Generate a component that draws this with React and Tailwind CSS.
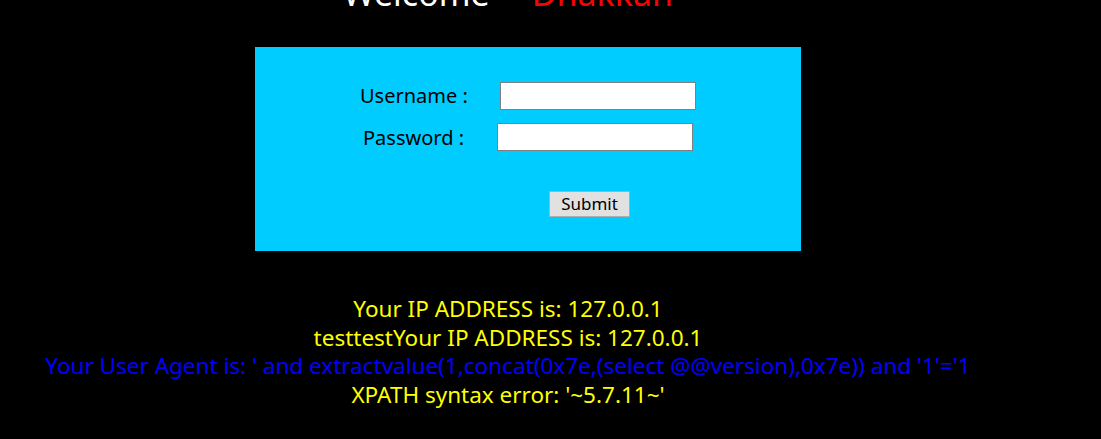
export default function App() {
  const font = { fontFamily: '"Noto Sans", "Open Sans", sans-serif' };
  return (
    <div className="w-[1101px] h-[439px] bg-black overflow-hidden flex flex-col" style={font}>
      <div className="h-[47px] flex flex-col">
        <div className="flex w-[1016px] justify-center mt-[-27px] text-[34px] leading-[40px]">
          <span className="text-white">Welcome</span>
          <span className="w-[42px]"></span>
          <span className="text-[#ff0000]">Dhakkan</span>
        </div>
      </div>
      <div className="ml-[255px] w-[546px] h-[204px] bg-[#00ccff] flex flex-col shrink-0">
        <div className="flex items-center mt-[35px] h-[27px]">
          <span className="ml-[105px] w-[140px] text-[20px] leading-[27px] text-black">Username :</span>
          <input className="w-[196px] h-[28px] bg-white border border-[#808080]" />
        </div>
        <div className="flex items-center mt-[14px] h-[28px]">
          <span className="ml-[108px] w-[134px] text-[20px] leading-[27px] text-black">Password :</span>
          <input className="w-[196px] h-[28px] bg-white border border-[#808080]" />
        </div>
        <div className="flex mt-[40px]">
          <button className="ml-[294px] w-[81px] h-[26px] bg-[#e1e1e1] border border-[#adadad] text-[17px] leading-[22px] text-black">Submit</button>
        </div>
      </div>
      <div className="w-[1016px] mt-[44px] text-center text-[22.5px] leading-[28.7px]">
        <div className="text-[#ffff00]">Your IP ADDRESS is: 127.0.0.1</div>
        <div className="text-[#ffff00]">testtestYour IP ADDRESS is: 127.0.0.1</div>
        <div className="text-[#0000ff]">Your User Agent is: ' and extractvalue(1,concat(0x7e,(select @@version),0x7e)) and '1'='1</div>
        <div className="text-[#ffff00]">XPATH syntax error: '~5.7.11~'</div>
      </div>
    </div>
  );
}
